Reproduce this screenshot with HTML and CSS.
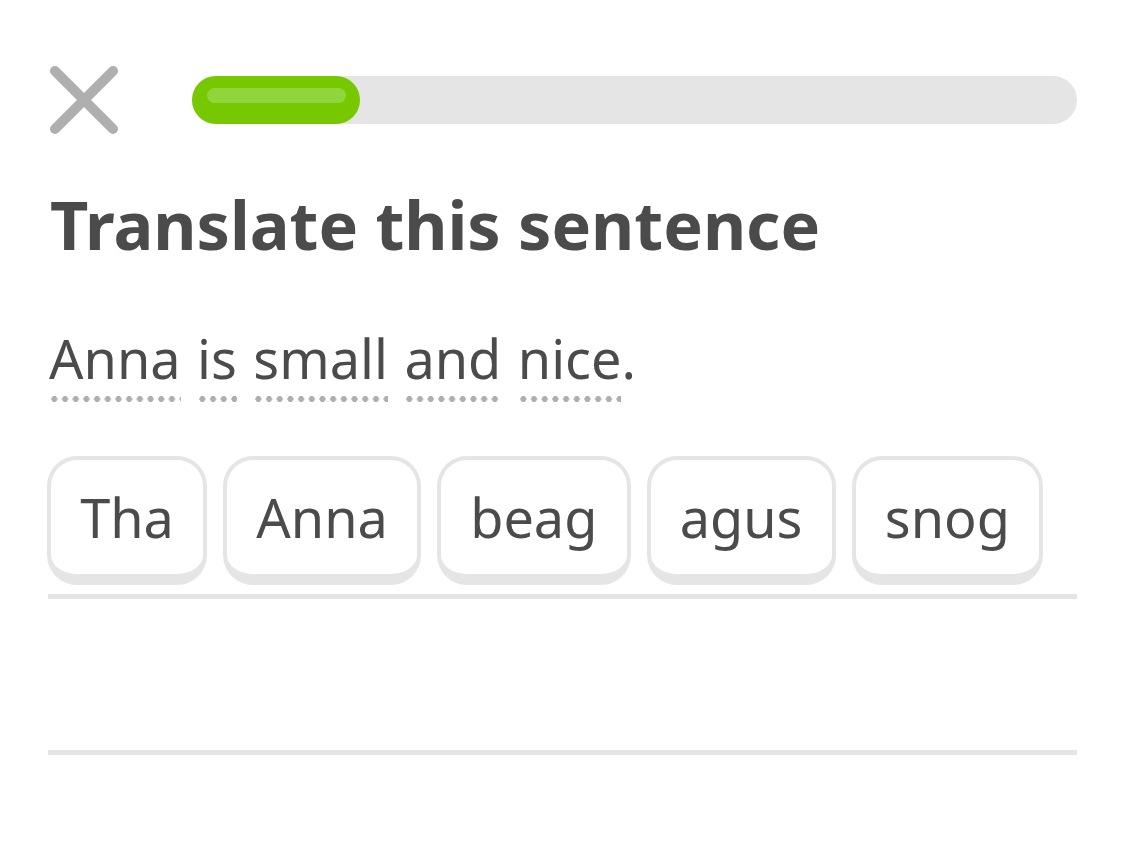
FILE: index.html
```html
<!DOCTYPE html>
<html lang="en">
<head>
<meta charset="utf-8">
<title>Translate this sentence</title>
<link rel="stylesheet" href="styles.css">
</head>
<body>
<main class="lesson">
  <header class="top">
    <button class="close" aria-label="Close">
      <svg width="68" height="68" viewBox="0 0 68 68" aria-hidden="true">
        <path d="M5 5 L63 63 M63 5 L5 63" stroke="#afafaf" stroke-width="10" stroke-linecap="round" fill="none"/>
      </svg>
    </button>
    <div class="progress">
      <div class="progress-fill" style="width:168px"><span class="shine"></span></div>
    </div>
  </header>

  <h1 class="title">Translate this sentence</h1>

  <p class="sentence"><span class="word">Anna</span><span class="word">is</span><span class="word">small</span><span class="word">and</span><span class="word last">nice</span><span class="punct">.</span></p>

  <div class="answer">
    <div class="chips">
      <button class="chip">Tha</button>
      <button class="chip">Anna</button>
      <button class="chip">beag</button>
      <button class="chip">agus</button>
      <button class="chip">snog</button>
    </div>
    <div class="rule"></div>
    <div class="blank"></div>
    <div class="rule"></div>
  </div>
</main>
</body>
</html>
```
FILE: styles.css
```css
html, body {
  margin: 0;
  padding: 0;
  background: #ffffff;
}
body {
  font-family: "Noto Sans", "DejaVu Sans", sans-serif;
  color: #4b4b4b;
}
.lesson {
  padding: 66px 48px 0 48px;
}
.top {
  display: flex;
  align-items: center;
  height: 68px;
}
.close {
  margin: 0 0 0 2px;
  padding: 0;
  border: 0;
  background: none;
  width: 68px;
  height: 68px;
  display: block;
}
.close svg { display: block; }
.progress {
  margin-left: 74px;
  flex: 1;
  height: 48px;
  border-radius: 24px;
  background: #e5e5e5;
  display: flex;
}
.progress-fill {
  height: 48px;
  border-radius: 24px;
  background: #78c800;
  box-sizing: border-box;
  padding: 12px 14px 0 15px;
}
.shine {
  display: block;
  height: 15px;
  border-radius: 8px;
  background: #8fd53b;
}
.title {
  margin: 50px 0 0 2px;
  font-size: 66.5px;
  line-height: 80px;
  font-weight: 700;
  letter-spacing: 0;
}
.sentence {
  margin: 62px 0 0 1px;
  display: flex;
  font-size: 54px;
  line-height: 64px;
}
.word {
  display: block;
  padding-bottom: 12px;
  margin-right: 16.5px;
  background-image: radial-gradient(circle, #afafaf 2.8px, rgba(175,175,175,0) 3.3px);
  background-size: 10.7px 6px;
  background-repeat: repeat-x;
  background-position: 0 100%;
}
.word.last { margin-right: 0; }
.punct { display: block; }
.answer {
  margin-top: 54px;
}
.chips {
  display: flex;
  gap: 16px;
  margin-left: -1px;
}
.chip {
  font-family: inherit;
  color: #4b4b4b;
  font-size: 54px;
  line-height: 114px;
  padding: 0 29.2px;
  margin: 0;
  background: #ffffff;
  border: 4px solid #e5e5e5;
  border-bottom-width: 11px;
  border-radius: 30px;
}
.rule {
  margin-top: 9px;
  height: 5px;
  background: #e5e5e5;
}
.blank {
  height: 142px;
}
```
